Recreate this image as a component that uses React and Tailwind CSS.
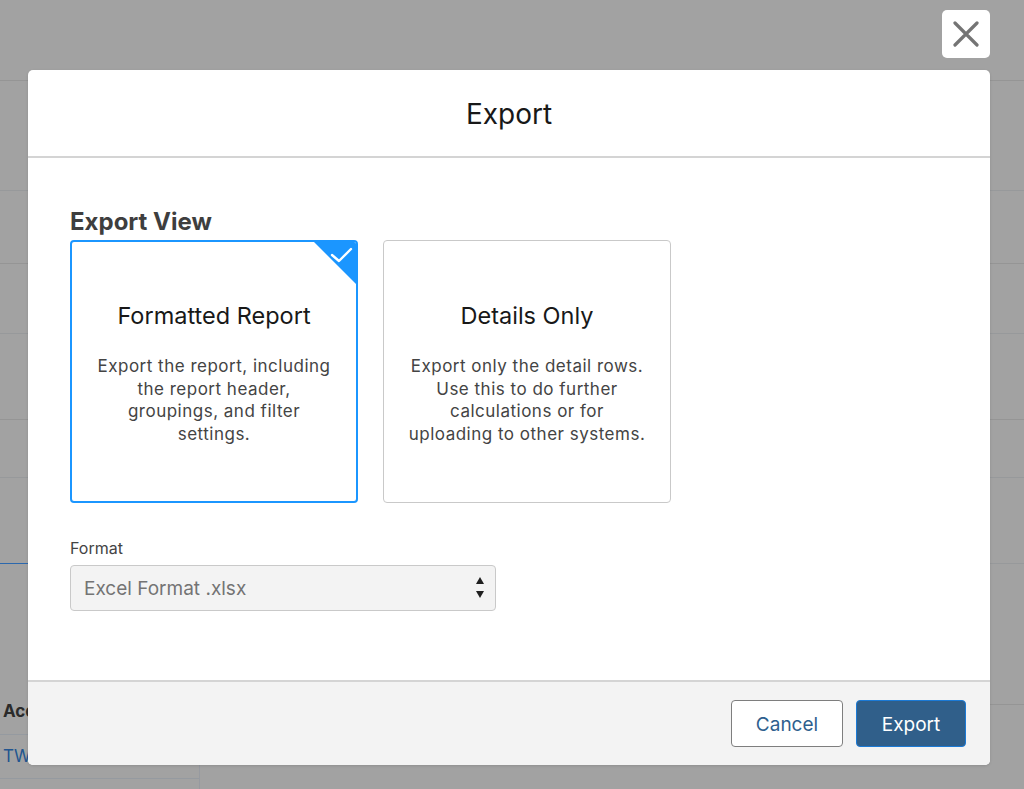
import React from 'react';

const FONT = { fontFamily: 'Inter, "Liberation Sans", Arial, sans-serif' };

function CloseIcon() {
    return (
        <svg width="28" height="26" viewBox="0 0 28 26" fill="none">
            <path d="M3 2 L25 24 M25 2 L3 24" stroke="#747474" strokeWidth="3.2" strokeLinecap="round" />
        </svg>
    );
}

function SelectArrows() {
    return (
        <svg width="10" height="24" viewBox="0 0 10 24" fill="#1f1f1f">
            <polygon points="1,8 9,8 5,1" />
            <polygon points="1,15 9,15 5,22" />
        </svg>
    );
}

function ViewCard({ title, lines, selected }) {
    return (
        <div
            className={`relative w-[288px] h-[263px] rounded-[4px] bg-white flex flex-col items-center overflow-hidden ${
                selected ? 'border-2 border-[#1b96ff] pt-[59px]' : 'border border-[#c9c9c9] pt-[60px]'
            }`}
        >
            {selected && (
                <svg className="absolute -top-[2px] -right-[2px]" width="46" height="46" viewBox="0 0 46 46">
                    <polygon points="0,0 46,0 46,46" fill="#1b96ff" />
                    <polyline
                        points="20,15 27,21 39,9"
                        fill="none"
                        stroke="#fff"
                        strokeWidth="2.4"
                        strokeLinecap="round"
                        strokeLinejoin="round"
                    />
                </svg>
            )}
            <h3 className="text-[23.5px] leading-[30px] text-[#181818]">{title}</h3>
            <p className="mt-[24px] text-center text-[17px] leading-[22.5px] tracking-[0.5px] text-[#444444]">
                {lines.map((l, i) => (
                    <React.Fragment key={i}>
                        {l}
                        {i < lines.length - 1 && <br />}
                    </React.Fragment>
                ))}
            </p>
        </div>
    );
}

export default function App() {
    return (
        <div className="relative w-[1024px] h-[789px] overflow-hidden bg-[#a2a2a2]" style={FONT}>
            {/* Page behind the overlay */}
            <div className="flex flex-col">
                <div className="h-[81px] border-b border-[#959595]" />
                <div className="h-[110px] border-b border-[#97999b]" />
                <div className="h-[73px] border-b border-[#959595]" />
                <div className="h-[70px] border-b border-[#97999b]" />
                <div className="h-[86px] border-b border-[#959595]" />
                <div className="h-[58px] border-b border-[#97999b]" />
                <div className="h-[86px] flex">
                    <div className="w-[400px] border-b border-[#2c68ad]" />
                    <div className="flex-1 border-b border-[#97999b]" />
                </div>
                <div className="flex">
                    <div className="w-[200px] flex flex-col border-r border-[#979aa0]">
                        <div className="h-[171px] flex items-end border-b border-[#959aa0]">
                            <span className="pl-[3px] pb-[10px] text-[17px] font-bold text-[#2b2b2b]">Account Name</span>
                        </div>
                        <div className="h-[44px] flex items-center border-b border-[#959aa0]">
                            <span className="pl-[3px] text-[17px] text-[#22558f]">TWX Inc.</span>
                        </div>
                        <div className="h-[20px]" />
                    </div>
                    <div className="flex-1">
                        <div className="h-[141px] border-b border-[#959595]" />
                    </div>
                </div>
            </div>

            {/* Close button */}
            <button className="absolute top-[10px] left-[942px] w-[48px] h-[48px] rounded-[5px] bg-white flex items-center justify-center">
                <CloseIcon />
            </button>

            {/* Modal */}
            <div className="absolute top-[70px] left-[28px] w-[962px] rounded-[5px] bg-white overflow-hidden shadow-[0_1px_3px_rgba(0,0,0,0.12)]">
                <div className="h-[88px] flex items-center justify-center border-b-2 border-[#d4d4d4]">
                    <h2 className="pt-[2px] text-[28px] leading-[34px] text-[#181818]">Export</h2>
                </div>

                <div className="h-[522px] px-[42px] pt-[50px]">
                    <h3 className="text-[24px] leading-[28px] font-bold text-[#3e3e3e]">Export View</h3>
                    <div className="mt-[4px] flex gap-[25px]">
                        <ViewCard
                            selected
                            title="Formatted Report"
                            lines={['Export the report, including', 'the report header,', 'groupings, and filter', 'settings.']}
                        />
                        <ViewCard
                            title="Details Only"
                            lines={[
                                'Export only the detail rows.',
                                'Use this to do further',
                                'calculations or for',
                                'uploading to other systems.',
                            ]}
                        />
                    </div>

                    <label className="block mt-[35px] text-[16px] leading-[20px] text-[#444444]">Format</label>
                    <div className="mt-[7px] w-[426px] h-[46px] rounded-[4px] border border-[#c9c9c9] bg-[#f3f3f3] flex items-center justify-between pl-[13px] pr-[10px]">
                        <span className="pt-[3px] text-[19px] text-[#747474]">Excel Format .xlsx</span>
                        <SelectArrows />
                    </div>
                </div>

                <div className="h-[85px] border-t-2 border-[#d4d4d4] bg-[#f3f3f3] flex justify-end items-start gap-[13px] pt-[18px] pr-[24px]">
                    <button className="w-[112px] h-[47px] pt-[3px] rounded-[4px] border border-[#7e7e7e] bg-white text-[19px] text-[#2e5f8e]">
                        Cancel
                    </button>
                    <button className="w-[110px] h-[47px] pt-[3px] rounded-[4px] border border-[#1b7ad6] bg-[#305f8a] text-[19px] text-white">
                        Export
                    </button>
                </div>
            </div>
        </div>
    );
}
